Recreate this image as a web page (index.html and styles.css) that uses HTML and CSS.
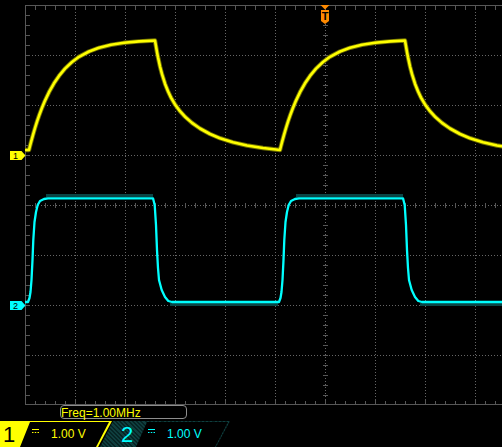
FILE: index.html
```html
<!DOCTYPE html>
<html lang="en">
<head>
<meta charset="utf-8">
<title>Oscilloscope</title>
<link rel="stylesheet" href="styles.css">
</head>
<body>
<div class="screen">
  <svg class="plot" width="502" height="405" viewBox="0 0 502 405" xmlns="http://www.w3.org/2000/svg">
    <g class="grid" shape-rendering="crispEdges">
      <path class="dots" d="M75.5 6V404M125.5 6V404M175.5 6V404M225.5 6V404M275.5 6V404M325.5 24V404M375.5 6V404M425.5 6V404M475.5 6V404"/>
      <path class="dots" d="M26 55.5H502M26 105.5H502M26 155.5H502M26 205.5H502M26 255.5H502M26 305.5H502M26 355.5H502"/>
      <line class="tick" x1="25" y1="8" x2="502" y2="8" stroke-width="4"/>
      <line class="tick" x1="28" y1="5" x2="28" y2="405" stroke-width="4"/>
      <line class="tick" x1="25" y1="402.5" x2="502" y2="402.5" stroke-width="3"/>
      <line class="tick major" x1="75" y1="401.5" x2="502" y2="401.5" stroke-width="5"/>
      <line class="tick" x1="35" y1="205.5" x2="502" y2="205.5" stroke-width="5"/>
      <line class="tick" x1="325.5" y1="25" x2="325.5" y2="405" stroke-width="5"/>
      <path class="border" d="M25.5 5V405M25 5.5H502M25 404.5H502M25 205.5H31"/>
    </g>

    <g class="trace ch1-trace">
      <polyline class="halo" points="25,150 29,150 30,146 31,142.1 33,134.8 35,128 37,121.7 39,115.8 42,107.8 45,100.6 49,92.2 54,83.3 59,75.9 65,68.6 72,62 79,56.8 89,51.5 99,47.8 111,44.8 124,42.8 139,41.4 155,40.5 156,46.3 157,52.1 158,57.3 160,66.5 162,74.2 165,83.7 168,91.3 171,97.6 175,104.4 180,111.2 185,116.7 192,122.9 200,128.5 210,134 220,138.2 233,142.3 247,145.5 263,148 280,150 281,146 282,142.1 284,134.8 286,128 288,121.7 290,115.8 293,107.8 296,100.6 300,92.2 305,83.3 310,75.9 316,68.6 323,62 330,56.8 340,51.5 350,47.8 362,44.8 375,42.8 390,41.4 405,40.5 406,46.3 407,52.1 408,57.3 410,66.5 412,74.2 415,83.7 418,91.3 421,97.6 425,104.4 430,111.2 435,116.7 442,122.9 450,128.5 460,134 470,138.2 483,142.3 497,145.5 513,148"/>
      <polyline class="core" points="25,150 29,150 30,146 31,142.1 33,134.8 35,128 37,121.7 39,115.8 42,107.8 45,100.6 49,92.2 54,83.3 59,75.9 65,68.6 72,62 79,56.8 89,51.5 99,47.8 111,44.8 124,42.8 139,41.4 155,40.5 156,46.3 157,52.1 158,57.3 160,66.5 162,74.2 165,83.7 168,91.3 171,97.6 175,104.4 180,111.2 185,116.7 192,122.9 200,128.5 210,134 220,138.2 233,142.3 247,145.5 263,148 280,150 281,146 282,142.1 284,134.8 286,128 288,121.7 290,115.8 293,107.8 296,100.6 300,92.2 305,83.3 310,75.9 316,68.6 323,62 330,56.8 340,51.5 350,47.8 362,44.8 375,42.8 390,41.4 405,40.5 406,46.3 407,52.1 408,57.3 410,66.5 412,74.2 415,83.7 418,91.3 421,97.6 425,104.4 430,111.2 435,116.7 442,122.9 450,128.5 460,134 470,138.2 483,142.3 497,145.5 513,148"/>
    </g>

    <g class="trace ch2-trace">
      <path class="noise" d="M46 195.5H153M296 195.5H403M170 304.5H278M420 304.5H502"/>
      <polyline class="core" points="25,302 28,302 29.5,298 30.5,292 31.5,280 32.5,260 33.3,240 34.5,222 36,212 37.7,205 40,201 44,199 48,198.3 153,198.3 154.7,205 156,225 157,250 158,268 159,280 161.7,290 165,297 168.3,301 172,302 279,302 280.5,298 281.5,292 282.5,280 283.5,260 284.3,240 285.5,222 287,212 288.7,205 291,201 295,199 299,198.3 403,198.3 404.7,205 406,225 407,250 408,268 409,280 411.7,290 415,297 418.3,301 422,302 502,302"/>
    </g>

    <g class="trigger">
      <polygon points="320.5,5 329.5,5 325,9.5"/>
      <path d="M321 10H329V21L325 24L321 21Z"/>
      <text x="325" y="20" class="trig-label">T</text>
    </g>

    <g class="marker ch1-marker">
      <path d="M10 151H21.5L25.5 155.5L21.5 160H10Z"/>
      <text x="15.5" y="158.7">1</text>
    </g>
    <g class="marker ch2-marker">
      <path d="M10 301H21.5L25.5 305.5L21.5 310H10Z"/>
      <text x="15.5" y="308.7">2</text>
    </g>
  </svg>

  <div class="freq-row">
    <div class="freq">Freq=1.00MHz</div>
  </div>

  <div class="status">
    <div class="ch ch1">
      <span class="ch-num">1</span>
      <div class="ch-info">
        <svg class="dc" width="7" height="4" viewBox="0 0 7 4" xmlns="http://www.w3.org/2000/svg"><path class="dc-lines" d="M0 0.5H7M0 3.5H1.5M2.75 3.5H4.25M5.5 3.5H7"/></svg>
        <span class="scale">1.00 V</span>
      </div>
    </div>
    <div class="ch ch2">
      <span class="ch-num">2</span>
      <div class="ch-info">
        <svg class="dc" width="7" height="4" viewBox="0 0 7 4" xmlns="http://www.w3.org/2000/svg"><path class="dc-lines" d="M0 0.5H7M0 3.5H1.5M2.75 3.5H4.25M5.5 3.5H7"/></svg>
        <span class="scale">1.00 V</span>
      </div>
    </div>
  </div>
</div>
</body>
</html>
```

FILE: styles.css
```css
html, body {
  margin: 0;
  padding: 0;
  background: #000;
}

body {
  width: 502px;
  height: 447px;
  overflow: hidden;
  font-family: "Liberation Sans", Arial, sans-serif;
}

.screen {
  width: 502px;
  height: 447px;
  display: flex;
  flex-direction: column;
  background: #000;
}

.plot {
  display: block;
  flex: none;
  width: 502px;
  height: 405px;
}

/* graticule */
.grid .dots {
  fill: none;
  stroke: #666;
  stroke-width: 1;
  stroke-dasharray: 1 2;
}
.grid .tick {
  stroke: #575757;
  stroke-dasharray: 1 9;
}
.grid .tick.major {
  stroke-dasharray: 1 49;
}
.grid .border {
  fill: none;
  stroke: #575757;
  stroke-width: 1;
}

/* traces */
.trace polyline,
.trace path {
  fill: none;
  stroke-linejoin: round;
  stroke-linecap: butt;
}
.ch1-trace .halo {
  stroke: #6f6f00;
  stroke-width: 4.4;
}
.ch1-trace .core {
  stroke: #ffff00;
  stroke-width: 2.6;
}
.ch2-trace .noise {
  stroke: #0a4646;
  stroke-width: 3;
}
.ch2-trace .core {
  stroke: #00ffff;
  stroke-width: 2.3;
}

/* trigger marker */
.trigger polygon,
.trigger path {
  fill: #ff8a00;
}
.trig-label {
  font-family: "Liberation Sans", Arial, sans-serif;
  font-size: 11px;
  font-weight: bold;
  text-anchor: middle;
  fill: #000;
}

/* channel ground markers */
.marker text {
  font-family: "Liberation Sans", Arial, sans-serif;
  font-size: 9px;
  text-anchor: middle;
  fill: #000;
}
.ch1-marker path { fill: #ffff00; }
.ch2-marker path { fill: #00ffff; }

/* frequency readout */
.freq-row {
  flex: none;
  height: 16px;
  padding-left: 60px;
  box-sizing: border-box;
}
.freq {
  box-sizing: border-box;
  width: 127px;
  height: 14px;
  border: 1px solid #8e8e8e;
  border-radius: 4px;
  color: #ffff00;
  font-size: 12px;
  line-height: 15px;
  white-space: nowrap;
  overflow: visible;
}

/* channel status bar */
.status {
  flex: none;
  height: 26px;
  display: flex;
}
.ch {
  display: flex;
  height: 26px;
  flex: none;
}
.ch-num {
  display: block;
  box-sizing: border-box;
  height: 26px;
  font-size: 22px;
  line-height: 26px;
  padding-top: 1px;
  flex: none;
}
.ch-info {
  display: flex;
  align-items: flex-start;
  margin-top: 1px;
  height: 25px;
  background: #000;
  line-height: 24px;
  font-size: 12px;
  flex: none;
}
.dc {
  display: block;
  flex: none;
  margin-left: 12px;
  margin-top: 7px;
}
.dc-lines {
  fill: none;
  stroke-width: 1;
}
.scale {
  display: block;
  margin-left: 12px;
  white-space: nowrap;
}

.ch1 {
  width: 112px;
  background: #ffff00;
  clip-path: polygon(0 0, 112px 0, 98px 100%, 0 100%);
}
.ch1 .ch-num {
  width: 20px;
  padding-left: 3px;
  color: #000;
}
.ch1 .ch-info {
  width: 89px;
  clip-path: polygon(10px 0, 89px 0, 76px 100%, 0 100%);
  color: #ffff00;
}
.ch1 .dc-lines {
  stroke: #ffff00;
}

.ch2 {
  width: 130px;
  margin-left: -12px;
  background: repeating-linear-gradient(45deg, #0f3e3e 0 1.5px, #062424 1.5px 3px);
  clip-path: polygon(13px 0, 130px 0, 116px 100%, 0 100%);
}
.ch2 .ch-num {
  width: 36px;
  padding-left: 21px;
  color: #00ffff;
}
.ch2 .ch-info {
  width: 92px;
  clip-path: polygon(11px 0, 92px 0, 79px 100%, 0 100%);
  color: #00ffff;
}
.ch2 .dc-lines {
  stroke: #00ffff;
}
```
